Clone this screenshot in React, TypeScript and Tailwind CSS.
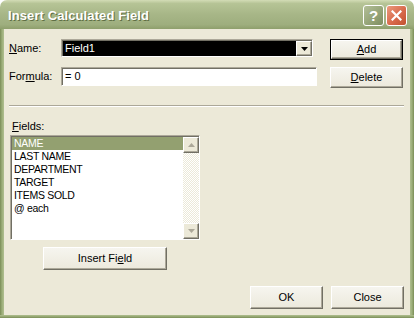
import React from "react";

const font = { fontFamily: '"Liberation Sans", Arial, sans-serif' };

const fields = ["NAME", "LAST NAME", "DEPARTMENT", "TARGET", "ITEMS SOLD", "@ each"];

function Btn({ children, className = "", def = false }: { children: React.ReactNode; className?: string; def?: boolean }) {
  const inner = (
    <div className="w-full h-full flex items-center justify-center bg-[linear-gradient(to_bottom,#F6F5EF,#ECE9DC)] border border-t-white border-l-white border-r-[#716F64] border-b-[#716F64] shadow-[inset_-1px_-1px_0_#ACA899] text-[11px] text-black">
      {children}
    </div>
  );
  if (def) {
    return <div className={`border border-black ${className}`}>{inner}</div>;
  }
  return <div className={className}>{inner}</div>;
}

function ScrollArrow({ up }: { up?: boolean }) {
  return (
    <div className="w-[16px] h-[16px] flex items-center justify-center bg-[#ECE9D8] border border-t-white border-l-white border-r-[#716F64] border-b-[#716F64] shadow-[inset_-1px_-1px_0_#ACA899]">
      <svg width="7" height="4" viewBox="0 0 7 4">
        {up ? (
          <path d="M3.5 0 L7 4 L0 4 Z" fill="#ACA899" />
        ) : (
          <path d="M0 0 L7 0 L3.5 4 Z" fill="#ACA899" />
        )}
      </svg>
    </div>
  );
}

export default function App() {
  return (
    <div className="w-[414px] h-[318px] flex flex-col bg-white overflow-hidden" style={font}>
      {/* title bar */}
      <div className="h-[29px] rounded-t-[7px] flex items-center pl-[8px] pr-[7px] bg-[linear-gradient(to_bottom,#D3DCB6_0%,#B6C496_12%,#A7B687_50%,#9EAE7E_85%,#8E9F6C_100%)]">
        <span className="text-white font-bold text-[13px] mt-[2px] [text-shadow:1px_1px_0_#5F6E44] tracking-[0.1px]">
          Insert Calculated Field
        </span>
        <div className="ml-auto flex gap-[2px] mt-[1px]">
          <div className="w-[21px] h-[21px] rounded-[3px] border border-white bg-[linear-gradient(135deg,#B3BF98,#93A275_60%,#7E8D60)] flex items-center justify-center text-white font-bold text-[15px] leading-none">
            ?
          </div>
          <div className="w-[21px] h-[21px] rounded-[3px] border border-white bg-[linear-gradient(135deg,#EB9A7E,#D86A4B_55%,#C2512F)] flex items-center justify-center">
            <svg width="11" height="11" viewBox="0 0 11 11">
              <path d="M1.5 1.5 L9.5 9.5 M9.5 1.5 L1.5 9.5" stroke="white" strokeWidth="2.2" strokeLinecap="square" />
            </svg>
          </div>
        </div>
      </div>

      <div className="flex-1 flex">
        <div className="w-[4px] bg-[linear-gradient(to_right,#7A8D57,#9CAE79_50%,#B0BF90)]" />
        <div className="flex-1 bg-[#ECE9D8] flex flex-col pl-[5px] pr-[6px] pt-[10px] text-[11px] text-black">
          {/* name row */}
          <div className="flex items-start h-[21px]">
            <div className="w-[52px] h-[18px] flex items-center">
              <span><span className="underline">N</span>ame:</span>
            </div>
            <div className="w-[252px] h-[18px] flex border border-t-[#ACA899] border-l-[#ACA899] border-r-white border-b-white shadow-[inset_1px_1px_0_#716F64]">
              <div className="flex-1 bg-black text-white pl-[2px] ml-[1px] mt-[1px] flex items-center">Field1</div>
              <div className="w-[16px] h-[15px] mt-[1px] flex items-center justify-center bg-[#ECE9D8] border border-t-white border-l-white border-r-[#716F64] border-b-[#716F64] shadow-[inset_-1px_-1px_0_#ACA899]">
                <svg width="7" height="4" viewBox="0 0 7 4">
                  <path d="M0 0 L7 0 L3.5 4 Z" fill="black" />
                </svg>
              </div>
            </div>
            <Btn def className="ml-[17px] w-[73px] h-[21px]">
              <span><span className="underline">A</span>dd</span>
            </Btn>
          </div>

          {/* formula row */}
          <div className="flex items-start mt-[7px] h-[21px]">
            <div className="w-[52px] h-[19px] flex items-center">
              <span>For<span className="underline">m</span>ula:</span>
            </div>
            <div className="w-[256px] h-[19px] bg-white flex items-center pl-[3px] border border-t-[#ACA899] border-l-[#ACA899] border-r-white border-b-white shadow-[inset_1px_1px_0_#716F64]">
              = 0
            </div>
            <Btn className="ml-[13px] w-[73px] h-[21px]">
              <span><span className="underline">D</span>elete</span>
            </Btn>
          </div>

          {/* separator */}
          <div className="mt-[17px] w-[395px] h-[2px] border-t border-t-[#ACA899] border-b border-b-white" />

          {/* fields */}
          <div className="mt-[13px] ml-[3px] h-[13px] leading-[13px]">
            <span className="underline">F</span>ields:
          </div>
          <div className="mt-[2px] ml-[1px] w-[190px] h-[105px] flex bg-white border border-t-[#ACA899] border-l-[#ACA899] border-r-white border-b-white shadow-[inset_1px_1px_0_#716F64]">
            <div className="flex-1 pt-[1px] pl-[1px]">
              {fields.map((f, i) => (
                <div
                  key={f}
                  className={`h-[13px] leading-[13px] pl-[2px] text-[10.5px] tracking-[-0.3px] ${i === 0 ? "bg-[#93A070] text-white" : "text-black"}`}
                >
                  {f}
                </div>
              ))}
            </div>
            <div className="w-[16px] mt-[1px] flex flex-col bg-[repeating-conic-gradient(#ECE9D8_0%_25%,#ffffff_0%_50%)] bg-[length:2px_2px]">
              <ScrollArrow up />
              <div className="flex-1" />
              <ScrollArrow />
            </div>
          </div>

          <Btn className="mt-[7px] ml-[34px] w-[124px] h-[23px]">
            <span>Insert Fi<span className="underline">e</span>ld</span>
          </Btn>

          <div className="mt-[16px] flex justify-end gap-[8px]">
            <Btn className="w-[73px] h-[23px]">OK</Btn>
            <Btn className="w-[73px] h-[23px]">Close</Btn>
          </div>
        </div>
        <div className="w-[4px] bg-[linear-gradient(to_left,#7A8D57,#9CAE79_50%,#B0BF90)]" />
      </div>
      <div className="h-[3px] bg-[linear-gradient(to_top,#7A8D57,#9CAE79_60%,#B0BF90)]" />
    </div>
  );
}
